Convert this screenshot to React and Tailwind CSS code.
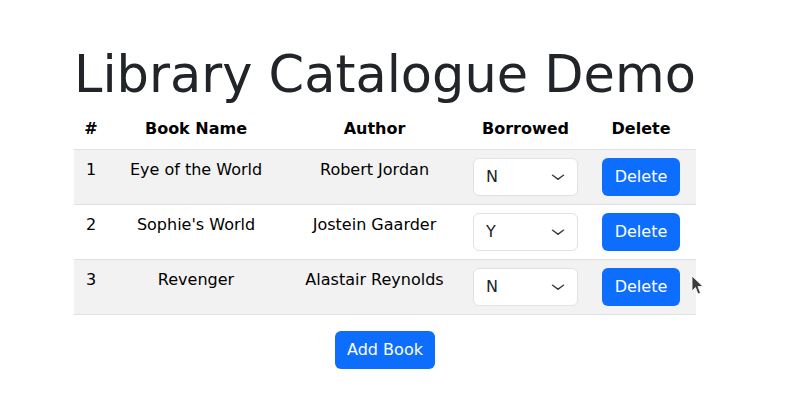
import { useState } from 'react'

const initialBooks = [
  { id: 1, name: 'Eye of the World', author: 'Robert Jordan', borrowed: 'N' },
  { id: 2, name: "Sophie's World", author: 'Jostein Gaarder', borrowed: 'Y' },
  { id: 3, name: 'Revenger', author: 'Alastair Reynolds', borrowed: 'N' },
]

export default function App() {
  const [books, setBooks] = useState(initialBooks)

  const setBorrowed = (id, value) =>
    setBooks(bs => bs.map(b => (b.id === id ? { ...b, borrowed: value } : b)))

  return (
    <div
      className="relative min-h-[419px] bg-white pt-[41px] pl-[74px] text-[#212529]"
      style={{ fontFamily: '"DejaVu Sans", sans-serif' }}
    >
      <div className="w-[622px]">
        <h1 className="text-[51px] leading-[68px] font-normal whitespace-nowrap">
          Library Catalogue Demo
        </h1>

        <table className="w-full table-fixed border-collapse text-base leading-6 text-center mb-4">
          <thead>
            <tr className="text-black font-bold">
              <th className="w-[34px] px-2 py-2 border-b border-[#dee2e6]">#</th>
              <th className="w-[176px] px-2 py-2 border-b border-[#dee2e6]">Book Name</th>
              <th className="w-[181px] px-2 py-2 border-b border-[#dee2e6]">Author</th>
              <th className="w-[121px] px-2 py-2 border-b border-[#dee2e6]">Borrowed</th>
              <th className="w-[110px] px-2 py-2 border-b border-[#dee2e6]">Delete</th>
            </tr>
          </thead>
          <tbody>
            {books.map((b, i) => (
              <tr key={b.id} className={i % 2 === 0 ? 'bg-[#f2f2f2]' : 'bg-white'}>
                <td className="px-2 py-2 align-top border-b border-[#dee2e6] text-black">{b.id}</td>
                <td className="px-2 py-2 align-top border-b border-[#dee2e6] text-black">{b.name}</td>
                <td className="px-2 py-2 align-top border-b border-[#dee2e6] text-black">{b.author}</td>
                <td className="px-2 py-2 align-top border-b border-[#dee2e6]">
                  <div className="relative">
                    <select
                      value={b.borrowed}
                      onChange={e => setBorrowed(b.id, e.target.value)}
                      className="block w-full h-[38px] appearance-none rounded-md border border-[#dee2e6] bg-white pl-3 pr-9 text-left text-base text-[#212529] outline-none"
                    >
                      <option value="N">N</option>
                      <option value="Y">Y</option>
                    </select>
                    <svg
                      className="pointer-events-none absolute right-3 top-[13px] w-4 h-3"
                      viewBox="0 0 16 16"
                      preserveAspectRatio="none"
                      fill="none"
                      stroke="#343a40"
                      strokeWidth="1.6"
                      strokeLinecap="round"
                      strokeLinejoin="round"
                    >
                      <path d="m2.5 5.5 5.5 5.5 5.5-5.5" />
                    </svg>
                  </div>
                </td>
                <td className="px-2 py-2 align-top border-b border-[#dee2e6]">
                  <button
                    onClick={() => setBooks(bs => bs.filter(x => x.id !== b.id))}
                    className="h-[38px] rounded-md bg-[#0d6efd] px-[12.5px] text-base text-white"
                  >
                    Delete
                  </button>
                </td>
              </tr>
            ))}
          </tbody>
        </table>

        <div className="flex justify-center">
          <button className="h-[38px] rounded-md bg-[#0d6efd] px-[12.5px] text-base text-white">
            Add Book
          </button>
        </div>
      </div>

      {/* mouse pointer */}
      <svg className="absolute left-[691px] top-[275px] w-[13px] h-[21px]" viewBox="0 0 13 21">
        <path
          d="M1 1 L1 16 L4.5 12.5 L7 19 L9.5 18 L7 11.5 L12 11.5 Z"
          fill="#3c3c3c"
          stroke="#ffffff"
          strokeWidth="0.8"
          strokeLinejoin="round"
        />
      </svg>
    </div>
  )
}
